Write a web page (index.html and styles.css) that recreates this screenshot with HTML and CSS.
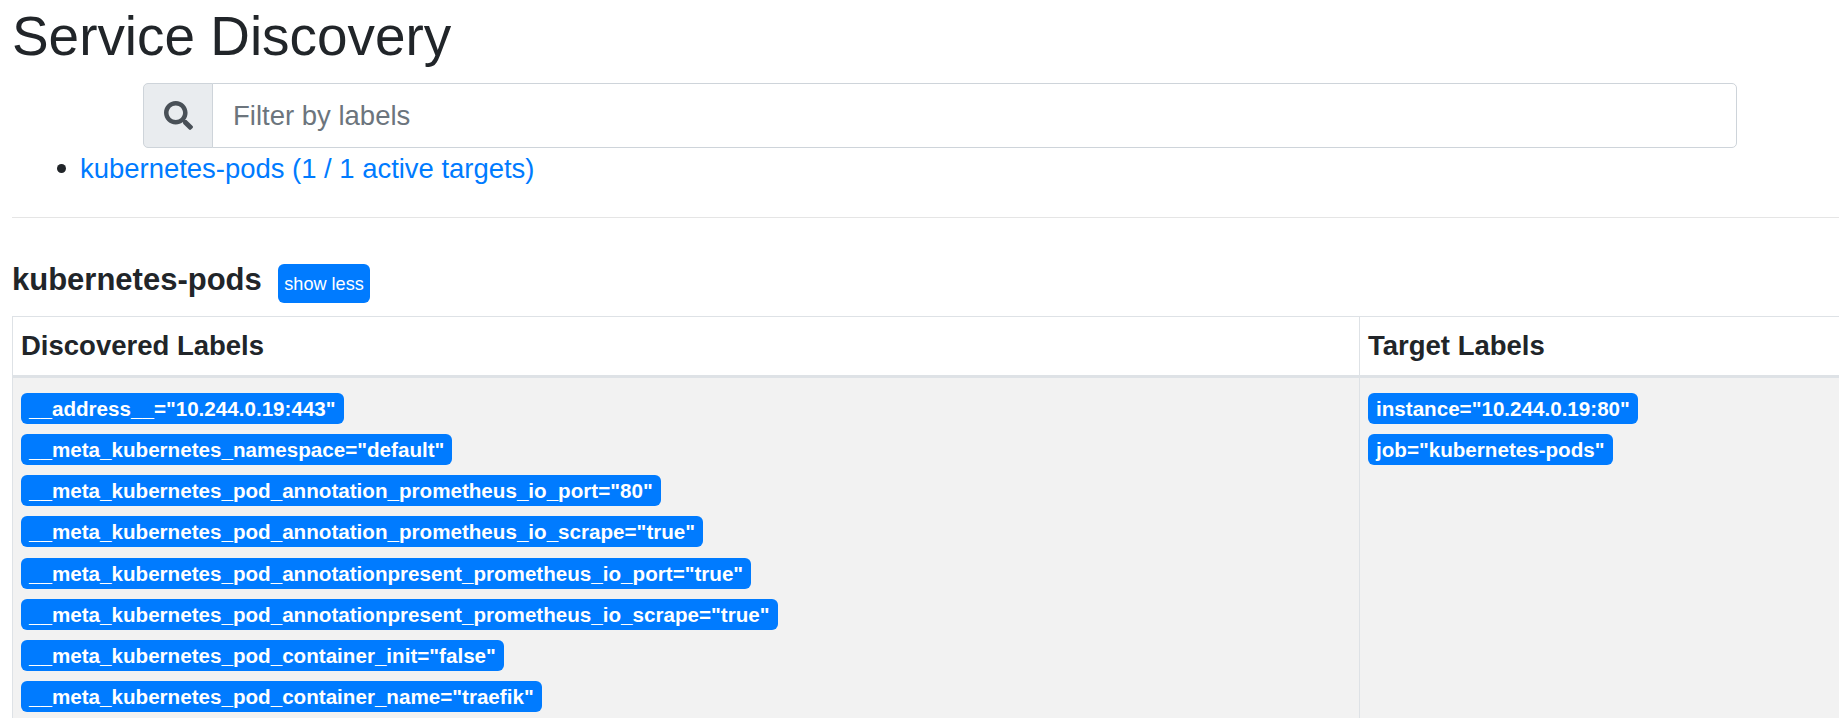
FILE: index.html
```html
<!DOCTYPE html>
<html lang="en">
<head>
<meta charset="utf-8">
<title>Service Discovery</title>
<link rel="stylesheet" href="styles.css">
</head>
<body>
<main class="page">
  <h1 class="title">Service Discovery</h1>
  <div class="search">
    <span class="search-addon">
      <svg class="search-icon" viewBox="0 0 512 512" aria-hidden="true"><path d="M505 442.7L405.3 343c-4.5-4.5-10.6-7-17-7H372c27.6-35.3 44-79.7 44-128C416 93.1 322.9 0 208 0S0 93.1 0 208s93.1 208 208 208c48.3 0 92.7-16.4 128-44v16.3c0 6.4 2.5 12.5 7 17l99.7 99.7c9.4 9.4 24.6 9.4 33.9 0l28.3-28.3c9.4-9.4 9.4-24.6.1-34zM208 336c-70.7 0-128-57.2-128-128 0-70.7 57.2-128 128-128 70.7 0 128 57.2 128 128 0 70.7-57.2 128-128 128z"/></svg>
    </span>
    <input class="search-input" type="text" placeholder="Filter by labels">
  </div>
  <ul class="pool-list">
    <li class="pool-item"><a class="pool-link" href="#kubernetes-pods">kubernetes-pods (1 / 1 active targets)</a></li>
  </ul>
  <hr class="rule">
  <div class="pool-head" id="kubernetes-pods">
    <h3 class="pool-title">kubernetes-pods</h3>
    <button class="toggle" type="button">show less</button>
  </div>
  <table class="labels">
    <thead>
      <tr>
        <th class="col-discovered">Discovered Labels</th>
        <th class="col-target">Target Labels</th>
      </tr>
    </thead>
    <tbody>
      <tr>
        <td>
          <div class="badge-row"><span class="badge">__address__="10.244.0.19:443"</span></div>
          <div class="badge-row"><span class="badge">__meta_kubernetes_namespace="default"</span></div>
          <div class="badge-row"><span class="badge">__meta_kubernetes_pod_annotation_prometheus_io_port="80"</span></div>
          <div class="badge-row"><span class="badge">__meta_kubernetes_pod_annotation_prometheus_io_scrape="true"</span></div>
          <div class="badge-row"><span class="badge">__meta_kubernetes_pod_annotationpresent_prometheus_io_port="true"</span></div>
          <div class="badge-row"><span class="badge">__meta_kubernetes_pod_annotationpresent_prometheus_io_scrape="true"</span></div>
          <div class="badge-row"><span class="badge">__meta_kubernetes_pod_container_init="false"</span></div>
          <div class="badge-row"><span class="badge">__meta_kubernetes_pod_container_name="traefik"</span></div>
        </td>
        <td>
          <div class="badge-row"><span class="badge">instance="10.244.0.19:80"</span></div>
          <div class="badge-row"><span class="badge">job="kubernetes-pods"</span></div>
        </td>
      </tr>
    </tbody>
  </table>
</main>
</body>
</html>
```
FILE: styles.css
```css
html, body {
  margin: 0;
  height: 718px;
  overflow: hidden;
  background: #fff;
}
body {
  font-family: "Liberation Sans", Arial, sans-serif;
  font-size: 21.33px;
  line-height: 1.5;
  color: #212529;
}
.page {
  width: 1900px;
  padding: 3px 0 0 12px;
  box-sizing: border-box;
}
.title {
  margin: 0 0 14px;
  font-size: 54.9px;
  font-weight: 400;
  line-height: 66px;
}
.search {
  display: flex;
  width: 1594px;
  height: 65px;
  margin-left: 131px;
  box-sizing: border-box;
}
.search-addon {
  display: flex;
  align-items: center;
  justify-content: center;
  width: 70px;
  flex: none;
  box-sizing: border-box;
  background: #e9ecef;
  border: 1px solid #ced4da;
  border-radius: 5px 0 0 5px;
}
.search-icon {
  width: 29px;
  height: 29px;
  fill: #495057;
}
.search-input {
  flex: 1;
  min-width: 0;
  box-sizing: border-box;
  margin-left: -1px;
  padding: 0 20px;
  font-family: inherit;
  font-size: 27.5px;
  color: #495057;
  background: #fff;
  border: 1px solid #ced4da;
  border-radius: 0 5px 5px 0;
  outline: none;
}
.search-input::placeholder {
  color: #6c757d;
  opacity: 1;
}
.pool-list {
  margin: 0 0 21.33px;
  padding-left: 45px;
  list-style: none;
  font-size: 27.45px;
  line-height: 41px;
}
.pool-item {
  display: flex;
  align-items: center;
  gap: 14px;
}
.pool-item::before {
  content: "";
  flex: none;
  width: 9px;
  height: 9px;
  border-radius: 50%;
  background: #212529;
}
.pool-link {
  color: #007bff;
  text-decoration: none;
}
.rule {
  margin: 28px 0 0;
  border: 0;
  border-top: 1px solid rgba(0, 0, 0, 0.1);
}
.pool-head {
  display: flex;
  align-items: center;
  gap: 16px;
  margin-top: 45px;
  height: 40px;
}
.pool-title {
  margin: 0 0 6px;
  font-size: 31px;
  font-weight: 700;
  line-height: 1.2;
}
.toggle {
  height: 39px;
  padding: 2px 6.5px 0;
  font-family: inherit;
  font-size: 18.1px;
  color: #fff;
  background: #007bff;
  border: 0;
  border-radius: 6px;
}
.labels {
  table-layout: fixed;
  width: 1888px;
  margin-top: 13px;
  border-collapse: collapse;
}
.col-discovered {
  width: 1347px;
}
.labels th, .labels td {
  padding: 8px;
  border: 1px solid #dee2e6;
  text-align: left;
  vertical-align: top;
}
.labels th {
  height: 60px;
  box-sizing: border-box;
  font-size: 27.5px;
  font-weight: 700;
  line-height: 1.5;
  border-bottom: 3px solid #dee2e6;
  vertical-align: middle;
}
.labels td {
  background: #f2f2f2;
  padding-top: 15px;
}
.badge-row {
  height: 41.15px;
}
.badge {
  display: inline-block;
  padding: 5px 8px;
  font-size: 20.61px;
  font-weight: 700;
  line-height: 21px;
  color: #fff;
  white-space: nowrap;
  background: #007bff;
  border-radius: 6px;
}
```
